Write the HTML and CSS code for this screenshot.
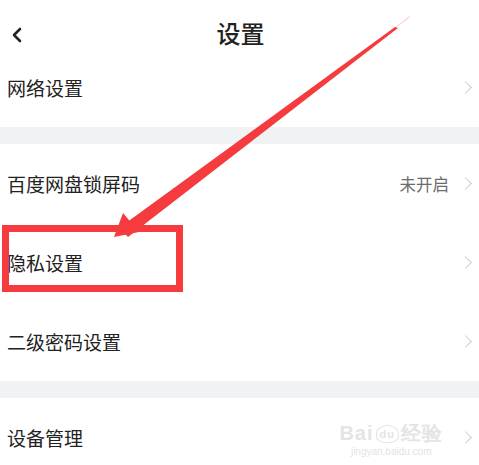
FILE: index.html
```html
<!DOCTYPE html>
<html lang="zh">
<head>
  <meta charset="UTF-8" />
  <meta name="viewport" content="width=device-width, initial-scale=1.0"/>
  <title>设置</title>
  <link rel="stylesheet" href="styles.css">
</head>
<body>

<div class="page">
  <header class="topbar">
    <svg class="back" width="14" height="16" viewBox="0 0 14 16">
      <path d="M10 2 L4 8 L10 14" fill="none" stroke="#222" stroke-width="2.6" stroke-linecap="round" stroke-linejoin="round"/>
    </svg>
    <h1>设置</h1>
  </header>

  <div class="row">
    <span class="label">网络设置</span>
    <span class="chev"></span>
  </div>

  <div class="band"></div>

  <div class="row">
    <span class="label">百度网盘锁屏码</span>
    <span class="value">未开启</span>
    <span class="chev"></span>
  </div>
  <div class="row">
    <span class="label">隐私设置</span>
    <span class="chev"></span>
  </div>
  <div class="row">
    <span class="label">二级密码设置</span>
    <span class="chev"></span>
  </div>

  <div class="band"></div>

  <div class="row">
    <span class="label">设备管理</span>
    <div class="watermark">
      <div class="wm-logo">Bai<span class="paw">du</span>经验</div>
      <div class="wm-url">jingyan.baidu.com</div>
    </div>
    <span class="chev"></span>
  </div>

  <!-- annotation drawn over the screenshot -->
  <div class="mark-box"></div>
  <svg class="arrow" width="479" height="465" viewBox="0 0 479 465">
    <polygon points="411,15 409,18 127,229 130,232" fill="#f53b3d" opacity="0.25"/>
    <polygon points="395,27 119,228 128,237 398,28" fill="#f53b3d"/>
    <polygon points="114,237 123,213 139,232" fill="#f53b3d"/>
  </svg>
</div>

</body>
</html>
```

FILE: styles.css
```css
body {
  margin: 0;
  background: #fff;
  font-family: "Noto Sans CJK SC", "Noto Sans", sans-serif;
  color: #222;
}

.page {
  position: relative;
  width: 479px;
  height: 465px;
  overflow: hidden;
}

.topbar {
  height: 48px;
  display: flex;
  align-items: flex-end;
  justify-content: center;
  position: relative;
}

.topbar h1 {
  margin: 0 0 0 2px;
  font-size: 24px;
  font-weight: 500;
  line-height: 26px;
  position: relative;
  top: -2px;
}

.back {
  position: absolute;
  left: 10px;
  top: 27px;
}

.row {
  height: 79px;
  display: flex;
  align-items: center;
  padding: 0 6px 0 7px;
}

.label {
  flex: 1;
  font-size: 19px;
  line-height: 22px;
  color: #222;
}

.value {
  font-size: 16.5px;
  color: #6b6b6b;
  margin-right: 12px;
}

.chev {
  width: 8px;
  height: 8px;
  border-top: 1.6px solid #cdcdcd;
  border-right: 1.6px solid #cdcdcd;
  transform: rotate(45deg);
  margin-right: 3px;
}

.band {
  height: 17px;
  background: #f1f2f4;
}

.watermark {
  margin-right: 18px;
  margin-top: 6px;
  color: #e4e4e4;
  text-align: center;
  font-family: "Liberation Sans", sans-serif;
}

.wm-logo {
  font-size: 20px;
  font-weight: bold;
  line-height: 22px;
  letter-spacing: 1px;
}

.paw {
  font-size: 11px;
  border: 1.5px solid #e4e4e4;
  border-radius: 50% 50% 40% 40%;
  padding: 2px 3px;
  margin: 0 2px;
  vertical-align: 2px;
}

.wm-url {
  font-size: 10px;
  line-height: 14px;
}

.mark-box {
  position: absolute;
  left: 2px;
  top: 225px;
  width: 167px;
  height: 53px;
  border: 7px solid #f53b3d;
}

.arrow {
  position: absolute;
  left: 0;
  top: 0;
  pointer-events: none;
}
```
